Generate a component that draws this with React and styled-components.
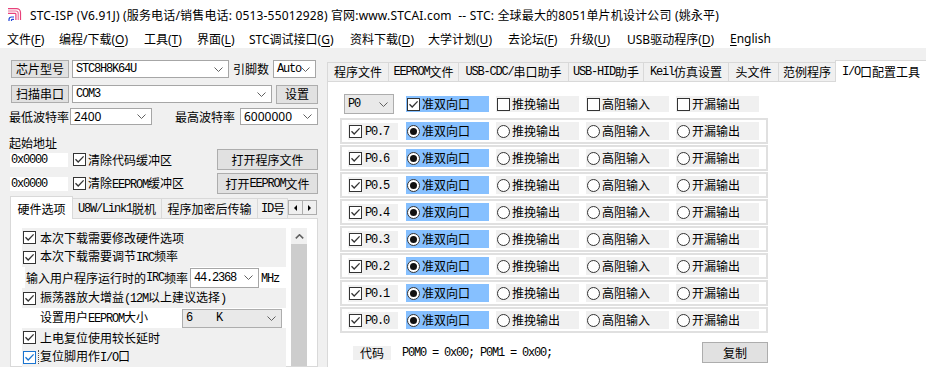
import React from "react";
import styled, { createGlobalStyle } from "styled-components";

const CJK = `"Noto Sans CJK SC", sans-serif`;
const UI = `"Noto Sans", "Noto Sans CJK SC", sans-serif`;
const MONO = `"Liberation Mono", "Noto Sans CJK SC", monospace`;
const BLUE = "#86c0ff";

const GlobalStyle = createGlobalStyle`
  html, body { margin: 0; padding: 0; }
  body { background: #f0f0f0; font-family: ${CJK}; font-size: 12px; color: #000; }
  #root { width: 926px; height: 367px; overflow: hidden; }
  * { box-sizing: border-box; }
`;

const Window = styled.div`
  width: 926px;
  height: 367px;
  display: flex;
  flex-direction: column;
  overflow: hidden;
  background: #f0f0f0;
`;

const TitleBar = styled.div`
  height: 29px;
  flex: none;
  background: #fff;
  display: flex;
  align-items: center;
  padding-left: 7px;
  font-family: ${UI};
  font-size: 12px;
  letter-spacing: 0.17px;
  white-space: pre;
`;

const AppIcon = styled.svg`
  flex: none;
  margin-right: 7px;
`;

const MenuBar = styled.div`
  height: 19px;
  flex: none;
  background: #fff;
  display: flex;
  align-items: center;
  padding-left: 7px;
  font-family: ${UI};
  font-size: 12px;
  white-space: nowrap;
`;

const MenuItem = styled.span`
  width: ${(p) => p.$w}px;
  flex: none;
  u { text-decoration: underline; text-underline-offset: 2px; }
`;

const Main = styled.div`
  flex: 1;
  display: flex;
  min-height: 0;
`;

const LeftPanel = styled.div`
  width: 326px;
  flex: none;
  display: flex;
  flex-direction: column;
  padding-top: 12px;
`;

const Row = styled.div`
  display: flex;
  align-items: center;
  flex: none;
  height: ${(p) => p.$h}px;
  margin-top: ${(p) => p.$mt || 0}px;
  padding-left: ${(p) => p.$pl || 0}px;
`;

const Button = styled.div`
  width: ${(p) => p.$w}px;
  height: ${(p) => p.$h}px;
  margin-left: ${(p) => (p.$auto ? "auto" : `${p.$ml || 0}px`)};
  margin-right: ${(p) => p.$mr || 0}px;
  flex: none;
  background: #e1e1e1;
  border: 1px solid #adadad;
  display: flex;
  align-items: center;
  justify-content: center;
  white-space: nowrap;
  line-height: 1;
`;

const ComboBox = styled.div`
  width: ${(p) => p.$w}px;
  height: ${(p) => p.$h}px;
  margin-left: ${(p) => p.$ml || 0}px;
  flex: none;
  background: ${(p) => (p.$grey ? "#e9e9e9" : "#fff")};
  border: 1px solid ${(p) => (p.$grey ? "#adadad" : "#a6a6a6")};
  display: flex;
  align-items: center;
  padding: 0 5px 0 3px;
`;

const ComboValue = styled.span`
  flex: 1;
  min-width: 0;
  white-space: pre;
  font-family: ${(p) => (p.$sans ? UI : MONO)};
  font-size: 12px;
  letter-spacing: ${(p) => (p.$sans ? "0" : "-1.2px")};
  line-height: 14px;
`;

const Label = styled.span`
  width: ${(p) => (p.$w ? `${p.$w}px` : "auto")};
  margin-left: ${(p) => p.$ml || 0}px;
  flex: none;
  white-space: nowrap;
  line-height: 1;
`;

const SectionLabel = styled.div`
  height: 12px;
  line-height: 12px;
  margin: 12px 0 0 9px;
  flex: none;
`;

const AddrInput = styled.div`
  width: 58px;
  height: 14px;
  flex: none;
  background: #fff;
  display: flex;
  align-items: center;
  padding-left: 1px;
  font-family: ${MONO};
  font-size: 12px;
  letter-spacing: -1.2px;
`;

const Lat = styled.span`
  font-family: ${MONO};
  font-size: 12px;
  letter-spacing: -1.2px;
`;

const TextRun = styled.span`
  margin-left: ${(p) => p.$ml || 0}px;
  white-space: pre;
  line-height: 1;
  padding-left: ${(p) => (p.$focus ? 1 : 0)}px;
  border-left: ${(p) => (p.$focus ? "1px dotted #555" : "none")};
`;

function M({ children }) {
  const parts = String(children).split(/([\x20-\x7e]+)/);
  return parts.map((p, i) =>
    p === "" ? null : /^[\x20-\x7e]+$/.test(p) ? (
      <Lat key={i}>{p}</Lat>
    ) : (
      <React.Fragment key={i}>{p}</React.Fragment>
    )
  );
}

const BoxFrame = styled.span`
  width: 13px;
  height: 13px;
  flex: none;
  background: #fff;
  border: 1px solid ${(p) => (p.$focus ? "#1a74d0" : "#333")};
  display: inline-flex;
  align-items: center;
  justify-content: center;
  margin-left: ${(p) => p.$ml || 0}px;
`;

function Check({ checked = true, focus, ml }) {
  const c = focus ? "#1a74d0" : "#333";
  return (
    <BoxFrame $focus={focus} $ml={ml}>
      {checked && (
        <svg width="11" height="11" viewBox="0 0 11 11">
          <polyline points="1.5,5.2 4.2,8 9.6,2.4" fill="none" stroke={c} strokeWidth="1.3" />
        </svg>
      )}
    </BoxFrame>
  );
}

const RadioRing = styled.span`
  width: 13px;
  height: 13px;
  flex: none;
  border-radius: 50%;
  border: 1px solid #333;
  background: #fff;
  display: inline-flex;
  align-items: center;
  justify-content: center;
`;

const RadioDot = styled.span`
  width: 7px;
  height: 7px;
  border-radius: 50%;
  background: #111;
`;

function Radio({ on }) {
  return <RadioRing>{on && <RadioDot />}</RadioRing>;
}

function Chevron() {
  return (
    <svg width="9" height="5" viewBox="0 0 9 5" style={{ flex: "none" }}>
      <polyline points="0.5,0.5 4.5,4.5 8.5,0.5" fill="none" stroke="#606060" strokeWidth="1" />
    </svg>
  );
}

function Combo({ w, h, ml, grey, sans, children }) {
  return (
    <ComboBox $w={w} $h={h} $ml={ml} $grey={grey}>
      <ComboValue $sans={sans}>{children}</ComboValue>
      <Chevron />
    </ComboBox>
  );
}

const TabStrip = styled.div`
  display: flex;
  align-items: flex-end;
  flex: none;
  height: ${(p) => p.$h}px;
  margin-top: ${(p) => p.$mt || 0}px;
  margin-left: ${(p) => p.$ml || 0}px;
  width: ${(p) => (p.$w ? `${p.$w}px` : "auto")};
  position: relative;
  z-index: 1;
`;

const Tab = styled.div`
  width: ${(p) => p.$w}px;
  height: ${(p) => (p.$active ? p.$h : p.$h - 2)}px;
  flex: none;
  margin-left: -1px;
  &:first-child { margin-left: 0; }
  background: ${(p) => (p.$active ? "#fff" : "#f0f0f0")};
  border: 1px solid #d9d9d9;
  border-bottom: ${(p) => (p.$active ? "none" : "1px solid #d9d9d9")};
  display: flex;
  align-items: center;
  justify-content: ${(p) => (p.$clip ? "flex-start" : "center")};
  padding-left: ${(p) => (p.$clip ? 3 : 0)}px;
  padding-top: ${(p) => (p.$active ? 1 : 0)}px;
  white-space: nowrap;
  line-height: 1;
  position: relative;
  z-index: ${(p) => (p.$active ? 2 : 1)};
`;

const ArrowPair = styled.div`
  display: flex;
  align-self: center;
  flex: none;
`;

const ArrowBtn = styled.div`
  width: 15px;
  height: 15px;
  margin-left: -1px;
  &:first-child { margin-left: 0; }
  background: #f0f0f0;
  border: 1px solid #adadad;
  display: flex;
  align-items: center;
  justify-content: center;
`;

const Tri = styled.span`
  width: 0;
  height: 0;
  border-top: 3px solid transparent;
  border-bottom: 3px solid transparent;
  ${(p) => (p.$dir === "left" ? "border-right: 3px solid #000;" : "border-left: 3px solid #000;")}
`;

const TabPanel = styled.div`
  width: 308px;
  margin-left: 10px;
  margin-top: -1px;
  flex: 1;
  background: #fff;
  border: 1px solid #d9d9d9;
  display: flex;
  align-items: flex-start;
  padding: 9px 0 0 11px;
  min-height: 0;
`;

const OptionList = styled.div`
  width: 264px;
  flex: none;
  display: flex;
  flex-direction: column;
`;

const OptRow = styled.div`
  height: ${(p) => p.$h}px;
  flex: none;
  display: flex;
  align-items: center;
  padding-left: ${(p) => p.$pl || 0}px;
  background: ${(p) => (p.$shade ? "#f0f0f0" : "transparent")};
`;

const GreyLabel = styled.div`
  width: ${(p) => p.$w}px;
  height: ${(p) => p.$h}px;
  margin-left: ${(p) => p.$ml || 0}px;
  flex: none;
  background: #f0f0f0;
  display: flex;
  align-items: center;
  justify-content: ${(p) => (p.$center ? "center" : "flex-start")};
  padding-left: ${(p) => (p.$center ? 0 : 1)}px;
  white-space: nowrap;
  line-height: 1;
`;

const Scrollbar = styled.div`
  width: 16px;
  margin-left: 5px;
  align-self: stretch;
  flex: none;
  background: #f0f0f0;
  display: flex;
  flex-direction: column;
`;

const ScrollUp = styled.div`
  height: 16px;
  flex: none;
  display: flex;
  align-items: center;
  justify-content: center;
`;

const Thumb = styled.div`
  flex: 1;
  background: #cdcdcd;
`;

const RightPanel = styled.div`
  flex: 1;
  display: flex;
  flex-direction: column;
  padding-top: 12px;
  padding-left: 1px;
  min-width: 0;
`;

const Content = styled.div`
  flex: 1;
  margin-top: -1px;
  background: #fff;
  border-top: 1px solid #d9d9d9;
  border-left: 1px solid #d9d9d9;
  padding: 12px 0 0 12px;
`;

const IoColumn = styled.div`
  width: 428px;
  display: flex;
  flex-direction: column;
`;

const HeaderRow = styled.div`
  height: 20px;
  display: flex;
  align-items: center;
  padding-left: 4px;
`;

const ModeCell = styled.div`
  width: 83px;
  height: ${(p) => p.$h}px;
  margin-left: ${(p) => p.$ml}px;
  flex: none;
  background: ${(p) => (p.$active ? BLUE : "#f0f0f0")};
  display: flex;
  align-items: center;
  padding-left: 1px;
  white-space: nowrap;
  line-height: 1;
`;

const IoRows = styled.div`
  margin-top: 4px;
  display: flex;
  flex-direction: column;
`;

const IoRow = styled.div`
  height: 26px;
  margin-bottom: 1px;
  border: 2px solid #e0e0e0;
  display: flex;
  align-items: center;
  padding-left: 6px;
  &:last-child { margin-bottom: 0; }
`;

const PinCell = styled.div`
  width: 50px;
  height: 17px;
  flex: none;
  background: #f0f0f0;
  display: flex;
  align-items: center;
  padding-left: 1px;
`;

const CodeRow = styled.div`
  height: 21px;
  margin-top: 9px;
  display: flex;
  align-items: center;
  padding-left: 13px;
`;

const CodeText = styled.span`
  margin-left: 11px;
  font-family: ${MONO};
  font-size: 12px;
  letter-spacing: -1.2px;
  white-space: pre;
`;

const MENU = [
  ["文件(", "F", ")", 52],
  ["编程/下载(", "O", ")", 85],
  ["工具(", "T", ")", 53],
  ["界面(", "L", ")", 52],
  ["STC调试接口(", "G", ")", 101],
  ["资料下载(", "D", ")", 78],
  ["大学计划(", "U", ")", 80],
  ["去论坛(", "F", ")", 62],
  ["升级(", "U", ")", 57],
  ["USB驱动程序(", "D", ")", 103],
];

const RTABS = [
  ["程序文件", 62],
  ["EEPROM文件", 71],
  ["USB-CDC/串口助手", 111],
  ["USB-HID助手", 76],
  ["Keil仿真设置", 86],
  ["头文件", 51],
  ["范例程序", 58],
  ["I/O口配置工具", 92, true],
];

const MODES = ["准双向口", "推挽输出", "高阻输入", "开漏输出"];
const PINS = ["P0.7", "P0.6", "P0.5", "P0.4", "P0.3", "P0.2", "P0.1", "P0.0"];

function Logo() {
  return (
    <AppIcon width="16" height="15" viewBox="0 0 16 15">
      <g fill="none" strokeWidth="1.2">
        <path d="M1 1.6H9.5a4 4 0 0 1 4 4V13" stroke="#e8417a" />
        <path d="M1 4H8.8a2.4 2.4 0 0 1 2.4 2.4V13" stroke="#ee6c98" />
        <path d="M1 6.4H8.3a0.6 0.6 0 0 1 0.6 0.6V13" stroke="#e8417a" />
        <path d="M2 14V12.5a2.5 2.5 0 0 1 2.5-2.5H7" stroke="#2446d8" />
        <path d="M4.5 14V13.2a0.8 0.8 0 0 1 0.8-0.8H7" stroke="#2446d8" />
      </g>
    </AppIcon>
  );
}

export default function App() {
  return (
    <>
      <GlobalStyle />
      <Window>
        <TitleBar>
          <Logo />
          <span>STC-ISP (V6.91J) (服务电话/销售电话: 0513-55012928) 官网:www.STCAI.com  -- STC: 全球最大的8051单片机设计公司 (姚永平)</span>
        </TitleBar>
        <MenuBar>
          {MENU.map(([a, k, b, w]) => (
            <MenuItem key={a} $w={w}>
              {a}
              <u>{k}</u>
              {b}
            </MenuItem>
          ))}
          <MenuItem $w={60}>
            <u>E</u>nglish
          </MenuItem>
        </MenuBar>
        <Main>
          <LeftPanel>
            <Row $h={18} $pl={11}>
              <Button $w={58} $h={18}>芯片型号</Button>
              <Combo w={157} h={18} ml={3}>STC8H8K64U</Combo>
              <Label $ml={4} $w={37}>引脚数</Label>
              <Combo w={43} h={18} ml={3}>Auto</Combo>
            </Row>
            <Row $h={18} $mt={7} $pl={11}>
              <Button $w={58} $h={18}>扫描串口</Button>
              <Combo w={200} h={18} ml={3}>COM3</Combo>
              <Button $w={42} $h={19} $ml={4}>设置</Button>
            </Row>
            <Row $h={17} $mt={5} $pl={9}>
              <Label $w={61}>最低波特率</Label>
              <Combo w={82} h={17} sans>2400</Combo>
              <Label $ml={23} $w={65}>最高波特率</Label>
              <Combo w={78} h={17} sans>6000000</Combo>
            </Row>
            <SectionLabel>起始地址</SectionLabel>
            <Row $h={21} $pl={10}>
              <AddrInput>0x0000</AddrInput>
              <Check ml={5} />
              <TextRun $ml={2}>清除代码缓冲区</TextRun>
              <Button $w={101} $h={21} $auto $mr={8}>打开程序文件</Button>
            </Row>
            <Row $h={21} $mt={3} $pl={10}>
              <AddrInput>0x0000</AddrInput>
              <Check ml={5} />
              <TextRun $ml={2}><M>清除EEPROM缓冲区</M></TextRun>
              <Button $w={101} $h={21} $auto $mr={8}><M>打开EEPROM文件</M></Button>
            </Row>
            <TabStrip $h={23} $mt={2} $ml={10} $w={308}>
              <Tab $w={63} $h={23} $active>硬件选项</Tab>
              <Tab $w={90} $h={23}><M>U8W/Link1脱机</M></Tab>
              <Tab $w={97} $h={23}>程序加密后传输</Tab>
              <Tab $w={31} $h={23} $clip><M>ID号</M></Tab>
              <ArrowPair>
                <ArrowBtn><Tri $dir="left" /></ArrowBtn>
                <ArrowBtn><Tri $dir="right" /></ArrowBtn>
              </ArrowPair>
            </TabStrip>
            <TabPanel>
              <OptionList>
                <OptRow $h={19} $shade $pl={1}>
                  <Check />
                  <TextRun $ml={4}>本次下载需要修改硬件选项</TextRun>
                </OptRow>
                <OptRow $h={20} $shade $pl={1}>
                  <Check />
                  <TextRun $ml={4}><M>本次下载需要调节IRC频率</M></TextRun>
                </OptRow>
                <OptRow $h={21}>
                  <GreyLabel $w={165} $h={21} $ml={3}><M>输入用户程序运行时的IRC频率</M></GreyLabel>
                  <Combo w={69} h={20}>44.2368</Combo>
                  <TextRun $ml={2}><Lat>MHz</Lat></TextRun>
                </OptRow>
                <OptRow $h={20} $shade $pl={1}>
                  <Check />
                  <TextRun $ml={4}><M>振荡器放大增益(12M以上建议选择)</M></TextRun>
                </OptRow>
                <OptRow $h={20} $pl={18}>
                  <Label $w={142}><M>设置用户EEPROM大小</M></Label>
                  <Combo w={100} h={19} grey>{"6    K"}</Combo>
                </OptRow>
                <OptRow $h={19} $shade $pl={1}>
                  <Check />
                  <TextRun $ml={4}>上电复位使用较长延时</TextRun>
                </OptRow>
                <OptRow $h={20} $shade $pl={1}>
                  <Check focus />
                  <TextRun $ml={2} $focus><M>复位脚用作I/O口</M></TextRun>
                </OptRow>
              </OptionList>
              <Scrollbar>
                <ScrollUp>
                  <svg width="9" height="5" viewBox="0 0 9 5">
                    <polyline points="0.8,4.4 4.5,0.8 8.2,4.4" fill="none" stroke="#606060" strokeWidth="1.6" />
                  </svg>
                </ScrollUp>
                <Thumb />
              </Scrollbar>
            </TabPanel>
          </LeftPanel>
          <RightPanel>
            <TabStrip $h={22}>
              {RTABS.map(([t, w, a]) => (
                <Tab key={t} $w={w} $h={22} $active={a}>
                  <M>{t}</M>
                </Tab>
              ))}
            </TabStrip>
            <Content>
              <IoColumn>
                <HeaderRow>
                  <Combo w={50} h={20} grey>P0</Combo>
                  {MODES.map((m, i) => (
                    <ModeCell key={m} $h={16} $ml={i === 0 ? 12 : 7} $active={i === 0}>
                      <Check checked={i === 0} />
                      <TextRun $ml={2}>{m}</TextRun>
                    </ModeCell>
                  ))}
                </HeaderRow>
                <IoRows>
                  {PINS.map((p) => (
                    <IoRow key={p}>
                      <PinCell>
                        <Check />
                        <TextRun $ml={3}><Lat>{p}</Lat></TextRun>
                      </PinCell>
                      {MODES.map((m, i) => (
                        <ModeCell key={m} $h={18} $ml={i === 0 ? 8 : 7} $active={i === 0}>
                          <Radio on={i === 0} />
                          <TextRun $ml={2}>{m}</TextRun>
                        </ModeCell>
                      ))}
                    </IoRow>
                  ))}
                </IoRows>
                <CodeRow>
                  <GreyLabel $w={38} $h={14} $center>代码</GreyLabel>
                  <CodeText>P0M0 = 0x00; P0M1 = 0x00;</CodeText>
                  <Button $w={66} $h={21} $auto>复制</Button>
                </CodeRow>
              </IoColumn>
            </Content>
          </RightPanel>
        </Main>
      </Window>
    </>
  );
}
